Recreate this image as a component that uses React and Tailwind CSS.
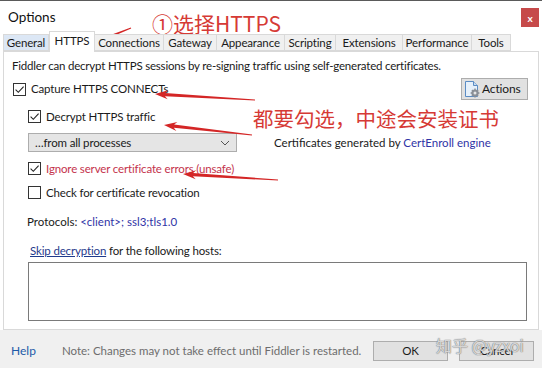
import React from "react";

function Check({ checked }) {
  return (
    <span className="w-[13px] h-[13px] border border-[#333] bg-white flex items-center justify-center shrink-0">
      {checked && (
        <svg width="11" height="11" viewBox="0 0 11 11">
          <path d="M1.6 5.6 L4.3 8.3 L9.6 2.6" fill="none" stroke="#222" strokeWidth="1.1" />
        </svg>
      )}
    </span>
  );
}

function arrowPts(x1, y1, x2, y2) {
  const dx = x2 - x1, dy = y2 - y1, L = Math.hypot(dx, dy);
  const ux = dx / L, uy = dy / L;
  const px = -uy, py = ux;
  const hl = 13, hw = 4.5;
  const bx = x2 - ux * hl, by = y2 - uy * hl;
  const cx = x2 - ux * (hl - 3), cy = y2 - uy * (hl - 3);
  const w0 = 0.5, w1 = 1.6;
  const pts = [
    [x1 + px * w0, y1 + py * w0],
    [cx + px * w1, cy + py * w1],
    [bx + px * hw, by + py * hw],
    [x2, y2],
    [bx - px * hw, by - py * hw],
    [cx - px * w1, cy - py * w1],
    [x1 - px * w0, y1 - py * w0],
  ];
  return pts.map((p) => p[0].toFixed(1) + "," + p[1].toFixed(1)).join(" ");
}

const tabs = [
  ["General", 46],
  ["HTTPS", 46],
  ["Connections", 70],
  ["Gateway", 54],
  ["Appearance", 69],
  ["Scripting", 52],
  ["Extensions", 68],
  ["Performance", 70],
  ["Tools", 40],
];

export default function App() {
  return (
    <div className="relative w-[542px] h-[368px] bg-white overflow-hidden flex flex-col border-t border-[#5a5a5a] font-['Lato','Noto_Sans',sans-serif] text-[11.5px] tracking-[-0.15px] text-[#1a1a1a]">
      {/* title bar */}
      <div className="h-[33px] shrink-0 flex items-start">
        <span className="ml-[8px] mt-[6px] text-[13.5px] leading-[20px] tracking-normal text-[#111]">Options</span>
        <div className="ml-auto mr-[3px] mt-[7px] w-[18px] h-[19px] bg-[#c64a4a] flex items-center justify-center text-white text-[10px] font-bold leading-none">
          x
        </div>
      </div>

      {/* tabs */}
      <div className="h-[17px] shrink-0 flex items-end pl-[3px] relative z-10">
        {tabs.map(([t, w], i) => {
          if (t === "HTTPS") {
            return (
              <div
                key={t}
                style={{ width: w }}
                className="h-[21px] mb-[-1px] bg-white border border-b-0 border-[#d9d9d9] flex items-start justify-center pt-[2px] leading-[14px] shrink-0"
              >
                {t}
              </div>
            );
          }
          return (
            <div
              key={t}
              style={{ width: w }}
              className={
                "h-[17px] border border-[#d9d9d9] flex items-center justify-center leading-[14px] shrink-0 -ml-px first:ml-0 " +
                (i === 0 ? "bg-[#dce7f5]" : "bg-[#f0f0f0]")
              }
            >
              {t}
            </div>
          );
        })}
      </div>

      {/* panel */}
      <div className="mx-[3px] h-[279px] shrink-0 border border-[#d9d9d9] bg-white flex flex-col">
        <p className="mt-[7px] ml-[8px] leading-[14px] tracking-[-0.2px]">
          Fiddler can decrypt HTTPS sessions by re-signing traffic using self-generated certificates.
        </p>

        <div className="mt-[5px] h-[22px] flex items-center">
          <span className="ml-[9px]"><Check checked /></span>
          <span className="ml-[5px] leading-[14px]">Capture HTTPS CONNECTs</span>
          <div className="ml-auto mr-[10px] w-[67px] h-[22px] bg-[#e1e1e1] border border-[#adadad] flex items-center pl-[2px]">
            <svg width="17" height="18" viewBox="0 0 17 18">
              <path d="M1.5 1.5 H9.5 L13.5 5.5 V16.5 H1.5 Z" fill="#e6f0fa" stroke="#5b8cc4" strokeWidth="1" />
              <path d="M9.5 1.5 V5.5 H13.5" fill="#c9dcf0" stroke="#5b8cc4" strokeWidth="1" />
              <circle cx="11" cy="13" r="3.6" fill="#8a8f96" />
              <circle cx="11" cy="13" r="1.5" fill="#e6e6e6" />
              <path d="M11 8.6 V10 M11 16 V17.4 M6.6 13 H8 M14 13 H15.4 M7.9 9.9 L8.9 10.9 M13.1 15.1 L14.1 16.1 M7.9 16.1 L8.9 15.1 M13.1 10.9 L14.1 9.9" stroke="#8a8f96" strokeWidth="1.4" />
            </svg>
            <span className="ml-[1px] text-[12px] leading-[14px]">Actions</span>
          </div>
        </div>

        <div className="mt-[10px] h-[13px] flex items-center">
          <span className="ml-[24px]"><Check checked /></span>
          <span className="ml-[5px] leading-[14px]">Decrypt HTTPS traffic</span>
        </div>

        <div className="mt-[10px] h-[19px] flex items-center">
          <div className="ml-[24px] w-[209px] h-[19px] bg-[#e5e5e5] border border-[#adadad] flex items-center pl-[6px] pr-[6px]">
            <span className="leading-[14px]">…from all processes</span>
            <svg className="ml-auto" width="10" height="6" viewBox="0 0 10 6">
              <path d="M1 1 L5 5 L9 1" fill="none" stroke="#555" strokeWidth="1" />
            </svg>
          </div>
          <span className="ml-[37px] leading-[14px] tracking-normal">
            Certificates generated by <span className="text-[#2f34a6]">CertEnroll engine</span>
          </span>
        </div>

        <div className="mt-[10px] h-[13px] flex items-center">
          <span className="ml-[24px]"><Check checked /></span>
          <span className="ml-[5px] leading-[14px] text-[#c4334c]">Ignore server certificate errors (unsafe)</span>
        </div>

        <div className="mt-[11px] h-[13px] flex items-center">
          <span className="ml-[24px]"><Check /></span>
          <span className="ml-[5px] leading-[14px]">Check for certificate revocation</span>
        </div>

        <p className="mt-[16px] ml-[23px] leading-[14px] tracking-normal">
          Protocols: <span className="text-[#2f34a6]">&lt;client&gt;; ssl3;tls1.0</span>
        </p>

        <p className="mt-[15px] ml-[26px] leading-[14px]">
          <span className="text-[#1f3a8c] underline">Skip decryption</span> for the following hosts:
        </p>

        <div className="mt-[4px] ml-[24px] w-[499px] h-[59px] border border-[#7a7a7a] bg-white" />
      </div>

      {/* footer */}
      <div className="flex-1 bg-[#f0f0f0] flex items-start pt-[11px]">
        <span className="ml-[11px] leading-[20px] text-[#1e5aa8] text-[12px] tracking-normal">Help</span>
        <span className="ml-[26px] leading-[20px] text-[#6d6d6d] tracking-normal">
          Note: Changes may not take effect until Fiddler is restarted.
        </span>
        <div className="ml-auto w-[75px] h-[20px] bg-[#e1e1e1] border border-[#adadad] flex items-center justify-center">OK</div>
        <div className="ml-[11px] mr-[8px] w-[75px] h-[20px] bg-[#e1e1e1] border border-[#adadad] flex items-center justify-center">Cancel</div>
      </div>

      {/* annotations */}
      <div className="absolute left-[152px] top-[10px] text-[21px] leading-[24px] tracking-normal text-[#d63a35] font-['Noto_Sans_CJK_SC',sans-serif] whitespace-nowrap">
        ①选择HTTPS
      </div>
      <div className="absolute left-[253px] top-[105px] text-[20.5px] leading-[24px] tracking-normal text-[#d63a35] font-['Noto_Sans_CJK_SC',sans-serif] whitespace-nowrap">
        都要勾选，中途会安装证书
      </div>
      <svg className="absolute left-0 top-0 pointer-events-none" width="542" height="368" viewBox="0 0 542 368">
        <polygon points={arrowPts(131, 27, 81, 47)} fill="#d42626" />
        <polygon points={arrowPts(255, 99, 155, 93)} fill="#d42626" />
        <polygon points={arrowPts(252, 134, 164, 124)} fill="#d42626" />
        <polygon points={arrowPts(278, 179, 183, 173)} fill="#d42626" />
      </svg>
      <div className="absolute left-[436px] top-[334px] text-[16px] leading-[20px] tracking-normal text-white/70 font-['Noto_Sans_CJK_SC',sans-serif] whitespace-nowrap [text-shadow:0_0_1px_#777,0_0_1px_#777]">
        知乎 @yzxoi
      </div>
    </div>
  );
}
